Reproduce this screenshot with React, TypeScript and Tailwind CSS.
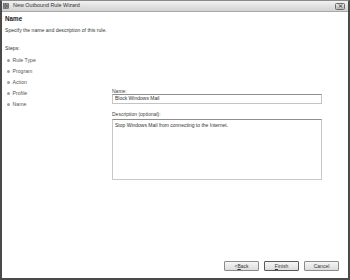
const steps = ["Rule Type", "Program", "Action", "Profile", "Name"];

function TitleIcon() {
  return (
    <svg width="6" height="6" viewBox="0 0 6 6" className="shrink-0">
      <rect x="0.5" y="0.5" width="5" height="5" fill="#9a9a9a" stroke="#555" strokeWidth="0.6" />
      <path d="M0.5 2.2H5.5M0.5 3.9H5.5M2.5 0.5V2.2M3.8 2.2V3.9M2.5 3.9V5.5" stroke="#444" strokeWidth="0.5" />
    </svg>
  );
}

function CloseButton() {
  return (
    <div className="ml-auto flex h-[7px] w-[10px] items-center justify-center rounded-[1.5px] border border-[#6a6a6a] bg-gradient-to-b from-[#e6e6e6] to-[#b8b8b8]">
      <svg width="5" height="4" viewBox="0 0 5 4">
        <path d="M1 0.5L4 3.5M4 0.5L1 3.5" stroke="#333" strokeWidth="0.9" />
      </svg>
    </div>
  );
}

function WizardButton({ label, hotkey, rest, isDefault }: { label?: string; hotkey: string; rest: string; isDefault?: boolean }) {
  return (
    <button
      type="button"
      className={`flex h-[10px] w-[35px] items-center justify-center rounded-[1px] border bg-gradient-to-b from-[#f6f6f6] to-[#dcdcdc] text-[5px] leading-none text-[#333] ${
        isDefault ? "border-[#5a5a5a]" : "border-[#8c8c8c]"
      }`}
    >
      {label}
      <span className="underline">{hotkey}</span>
      {rest}
    </button>
  );
}

export default function App() {
  return (
    <div className="flex h-[280px] w-[350px] flex-col border-x-2 border-b-2 border-t border-[#4a4a4a] border-t-[#8a8a8a] bg-white font-['Liberation_Sans',Arial,sans-serif] text-[#333]">
      <div className="flex h-[11px] shrink-0 items-center border-b border-[#a8a8a8] bg-gradient-to-b from-[#f2f2f2] to-[#d2d2d2] pl-[1px] pr-[3px]">
        <TitleIcon />
        <span className="ml-[4px] text-[5.4px] leading-none text-[#333]">New Outbound Rule Wizard</span>
        <CloseButton />
      </div>

      <div className="pl-[3px] pt-[3px]">
        <p className="text-[6.3px] font-bold leading-[7px] text-[#222]">Name</p>
        <p className="mt-[5px] text-[5.1px] leading-[6px]">Specify the name and description of this rule.</p>
      </div>

      <div className="mt-[12px] flex">
        <div className="w-[110px] shrink-0 pl-[3px]">
          <p className="text-[5.2px] leading-[6px]">Steps:</p>
          <ul className="mt-[4px]">
            {steps.map((step) => (
              <li key={step} className="flex h-[11px] items-center text-[5.2px] text-[#555]">
                <span className="ml-[2px] mr-[3px] h-[2.5px] w-[2.5px] rounded-full bg-[#a0a0a0]" />
                {step}
              </li>
            ))}
          </ul>
        </div>

        <div className="w-[210px] pt-[43px]">
          <p className="text-[5px] leading-[6px] text-[#444]">Name:</p>
          <div className="flex h-[10px] items-center border border-[#c4c4c4] border-t-[#8e8e8e] px-[2px] text-[5px]">
            Block Windows Mail
          </div>
          <p className="mt-[7px] text-[5px] leading-[6px] text-[#444]">Description (optional):</p>
          <div className="mt-[2px] h-[61px] border border-[#c8c8c8] border-t-[#8e8e8e] px-[2px] pt-[2px] text-[5px] leading-[6px]">
            Stop Windows Mail from connecting to the Internet.
          </div>
        </div>
      </div>

      <div className="flex-1" />

      <div className="flex justify-end gap-[5px] pb-[7px] pr-[9px]">
        <WizardButton label="< " hotkey="B" rest="ack" />
        <WizardButton hotkey="F" rest="inish" isDefault />
        <WizardButton hotkey="" rest="Cancel" />
      </div>
    </div>
  );
}
